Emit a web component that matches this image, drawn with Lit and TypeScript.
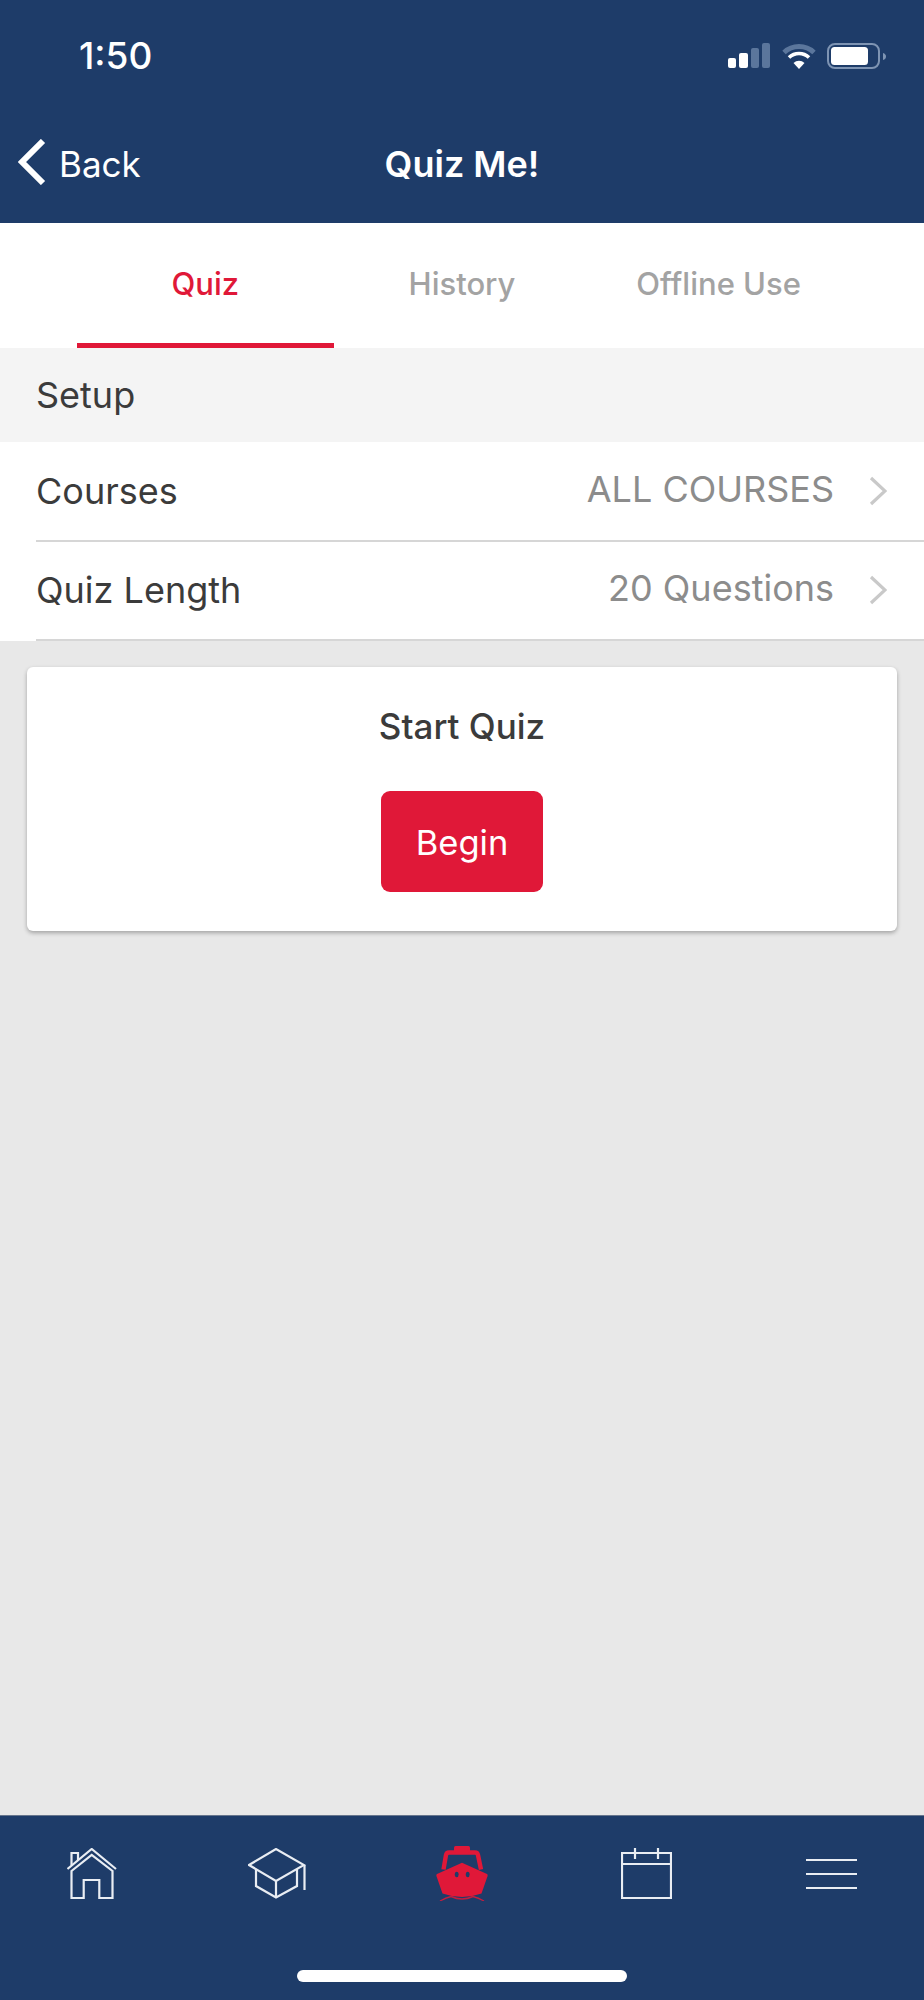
import { LitElement, html, css } from "lit";
import { customElement } from "lit/decorators.js";

@customElement("app-root")
export class AppRoot extends LitElement {
  static styles = css`
    :host { display: flex; flex-direction: column; width: 924px; min-height: 2000px; background: #e8e8e8; font-family: Inter, "Liberation Sans", sans-serif; color: #3b3b3b; }
    svg { display: block; flex: none; }
    .header { background: #1e3c69; color: #fff; height: 223px; }
    .status { height: 111px; display: flex; align-items: center; padding: 0 38px 0 79px; }
    .time { font-size: 37px; font-weight: 500; flex: 1; }
    .icons { display: flex; align-items: center; }
    .signal { margin-right: 12px; }
    .wifi { margin-right: 11px; }
    .bar { height: 112px; padding: 0 0 6px 0; box-sizing: border-box; display: grid; grid-template-columns: 1fr auto 1fr; align-items: center; }
    .back { display: flex; align-items: center; gap: 13px; font-size: 35px; padding-left: 18px; }
    .back svg { margin-bottom: 5px; }
    .title { font-size: 36px; font-weight: 600; }
    .tabs { background: #fff; height: 125px; padding: 0 77px; display: grid; grid-template-columns: repeat(3, 1fr); }
    .tab { box-sizing: border-box; border-bottom: 5px solid transparent; display: flex; align-items: center; justify-content: center; font-size: 31px; font-weight: 500; color: #a3a3a3; }
    .tab.on { color: #e01838; border-bottom-color: #e01838; }
    .section { height: 94px; background: #f4f4f4; display: flex; align-items: center; padding-left: 36px; font-size: 36px; }
    .rows { background: #fff; padding-left: 36px; }
    .row { box-sizing: border-box; height: 99.5px; border-bottom: 2px solid #d6d6d6; display: flex; align-items: center; padding-right: 37px; font-size: 36px; }
    .label { flex: 1; }
    .value { color: #8c8c8c; margin: 0 35px 4px 0; }
    .main { flex: 1; padding: 26px 27px; }
    .card { background: #fff; border-radius: 6px; box-shadow: 0 2px 4px rgba(0,0,0,.3); height: 264px; box-sizing: border-box; padding-top: 37px; display: flex; flex-direction: column; align-items: center; }
    .start { font-size: 35px; font-weight: 500; line-height: 44px; margin-bottom: 43px; }
    .btn { width: 162px; height: 101px; box-sizing: border-box; padding-top: 2px; border-radius: 9px; background: #e01838; color: #fff; display: flex; align-items: center; justify-content: center; font-size: 34.5px; }
    .nav { background: #1e3c69; height: 185px; box-sizing: border-box; border-top: 1px solid #66758c; padding-top: 30px; display: flex; flex-direction: column; }
    .cells { display: grid; grid-template-columns: repeat(5, 1fr); height: 55px; }
    .cell { display: flex; align-items: center; justify-content: center; }
    .line { fill: none; stroke: #e9edf3; stroke-width: 2.2; }
    .homebar { width: 330px; height: 12px; border-radius: 6px; background: #fff; margin: 69px auto 0; }
  `;

  private chevron() {
    return html`<svg width="18" height="30" viewBox="0 0 18 30"><path d="M2 2 L16 15 L2 28" fill="none" stroke="#c9c9c9" stroke-width="3.2"/></svg>`;
  }

  render() {
    return html`
      <div class="header">
        <div class="status">
          <div class="time">1:50</div>
          <div class="icons">
            <svg class="signal" width="42" height="25" viewBox="0 0 42 25">
              <rect x="0" y="15" width="8" height="10" rx="2" fill="#fff"/>
              <rect x="11" y="10" width="9" height="15" rx="2" fill="#fff"/>
              <rect x="23" y="5" width="8" height="20" rx="2" fill="#5b769c"/>
              <rect x="34" y="0" width="8" height="25" rx="2" fill="#5b769c"/>
            </svg>
            <svg class="wifi" width="34" height="26" viewBox="0 0 34 26">
              <path d="M2 9.5 A22 22 0 0 1 32 9.5" fill="none" stroke="#5b769c" stroke-width="5"/>
              <path d="M7 14.5 A14.5 14.5 0 0 1 27 14.5" fill="none" stroke="#fff" stroke-width="3.6"/>
              <path d="M11.5 20 A8 8 0 0 1 22.5 20 L17 26 Z" fill="#fff"/>
            </svg>
            <svg width="59" height="26" viewBox="0 0 59 26">
              <rect x="1" y="1" width="51" height="24" rx="7" fill="none" stroke="#7e94b3" stroke-width="2"/>
              <rect x="4" y="4" width="37" height="18" rx="3.5" fill="#fff"/>
              <path d="M56 10 Q59 11 59 13.5 Q59 16 56 17 Z" fill="#7e94b3"/>
            </svg>
          </div>
        </div>
        <div class="bar">
          <div class="back">
            <svg width="28" height="46" viewBox="0 0 28 46"><path d="M25 2 L4 23 L25 44" fill="none" stroke="#fff" stroke-width="6"/></svg>
            <span>Back</span>
          </div>
          <div class="title">Quiz Me!</div>
          <div></div>
        </div>
      </div>
      <div class="tabs">
        <div class="tab on">Quiz</div>
        <div class="tab">History</div>
        <div class="tab">Offline Use</div>
      </div>
      <div class="section">Setup</div>
      <div class="rows">
        <div class="row"><span class="label">Courses</span><span class="value">ALL COURSES</span>${this.chevron()}</div>
        <div class="row"><span class="label">Quiz Length</span><span class="value">20 Questions</span>${this.chevron()}</div>
      </div>
      <div class="main">
        <div class="card">
          <div class="start">Start Quiz</div>
          <div class="btn">Begin</div>
        </div>
      </div>
      <div class="nav">
        <div class="cells">
          <div class="cell">
            <svg width="50" height="51" viewBox="0 0 50 51">
              <path class="line" d="M0.5 21 L24.7 1 L49 21"/>
              <path class="line" d="M4.5 23 L24.7 7 L45.5 23 V50 H32.3 V32 H16.7 V50 H4.5 Z"/>
              <path class="line" d="M4.5 17 V5 H11 V12"/>
            </svg>
          </div>
          <div class="cell">
            <svg width="58" height="51" viewBox="0 0 58 51">
              <path class="line" d="M1 17 L28 1 L56 17 L28 33 Z"/>
              <path class="line" d="M8 21 V38 L28 49.5 L49 38 V21"/>
              <path class="line" d="M28 33 V49 M56.5 17 V42"/>
            </svg>
          </div>
          <div class="cell">
            <svg width="52" height="55" viewBox="0 0 52 55">
              <path d="M7.5 23.5 L10 9 Q10.5 6.5 13 6.5 H39 Q41.5 6.5 42 9 L45 23.5" fill="none" stroke="#e01838" stroke-width="4.4"/>
              <rect x="18" y="0" width="16" height="7" rx="1.5" fill="#e01838"/>
              <path d="M26 16.7 L51 28 Q52 28.6 51.6 30 L45.5 47.5 Q26 54.5 6.5 47.5 L0.4 30 Q0 28.6 1 28 Z" fill="#e01838"/>
              <ellipse cx="20.7" cy="28.5" rx="1.9" ry="2.8" fill="#1e3c69"/>
              <ellipse cx="31.7" cy="28.5" rx="1.9" ry="2.8" fill="#1e3c69"/>
              <path d="M4 55 Q10 51.5 15 50.5 Q26 55.5 37 50.5 Q42 51.5 48 55" fill="none" stroke="#e01838" stroke-width="1.4" opacity="0.85"/>
            </svg>
          </div>
          <div class="cell">
            <svg width="51" height="51" viewBox="0 0 51 51">
              <path class="line" d="M1 5 H50 V50 H1 Z M1 16 H50 M14 0 V11 M37 0 V11"/>
            </svg>
          </div>
          <div class="cell">
            <svg width="51" height="30" viewBox="0 0 51 30">
              <path class="line" d="M0 1 H51 M0 15 H51 M0 29 H51"/>
            </svg>
          </div>
        </div>
        <div class="homebar"></div>
      </div>
    `;
  }
}
